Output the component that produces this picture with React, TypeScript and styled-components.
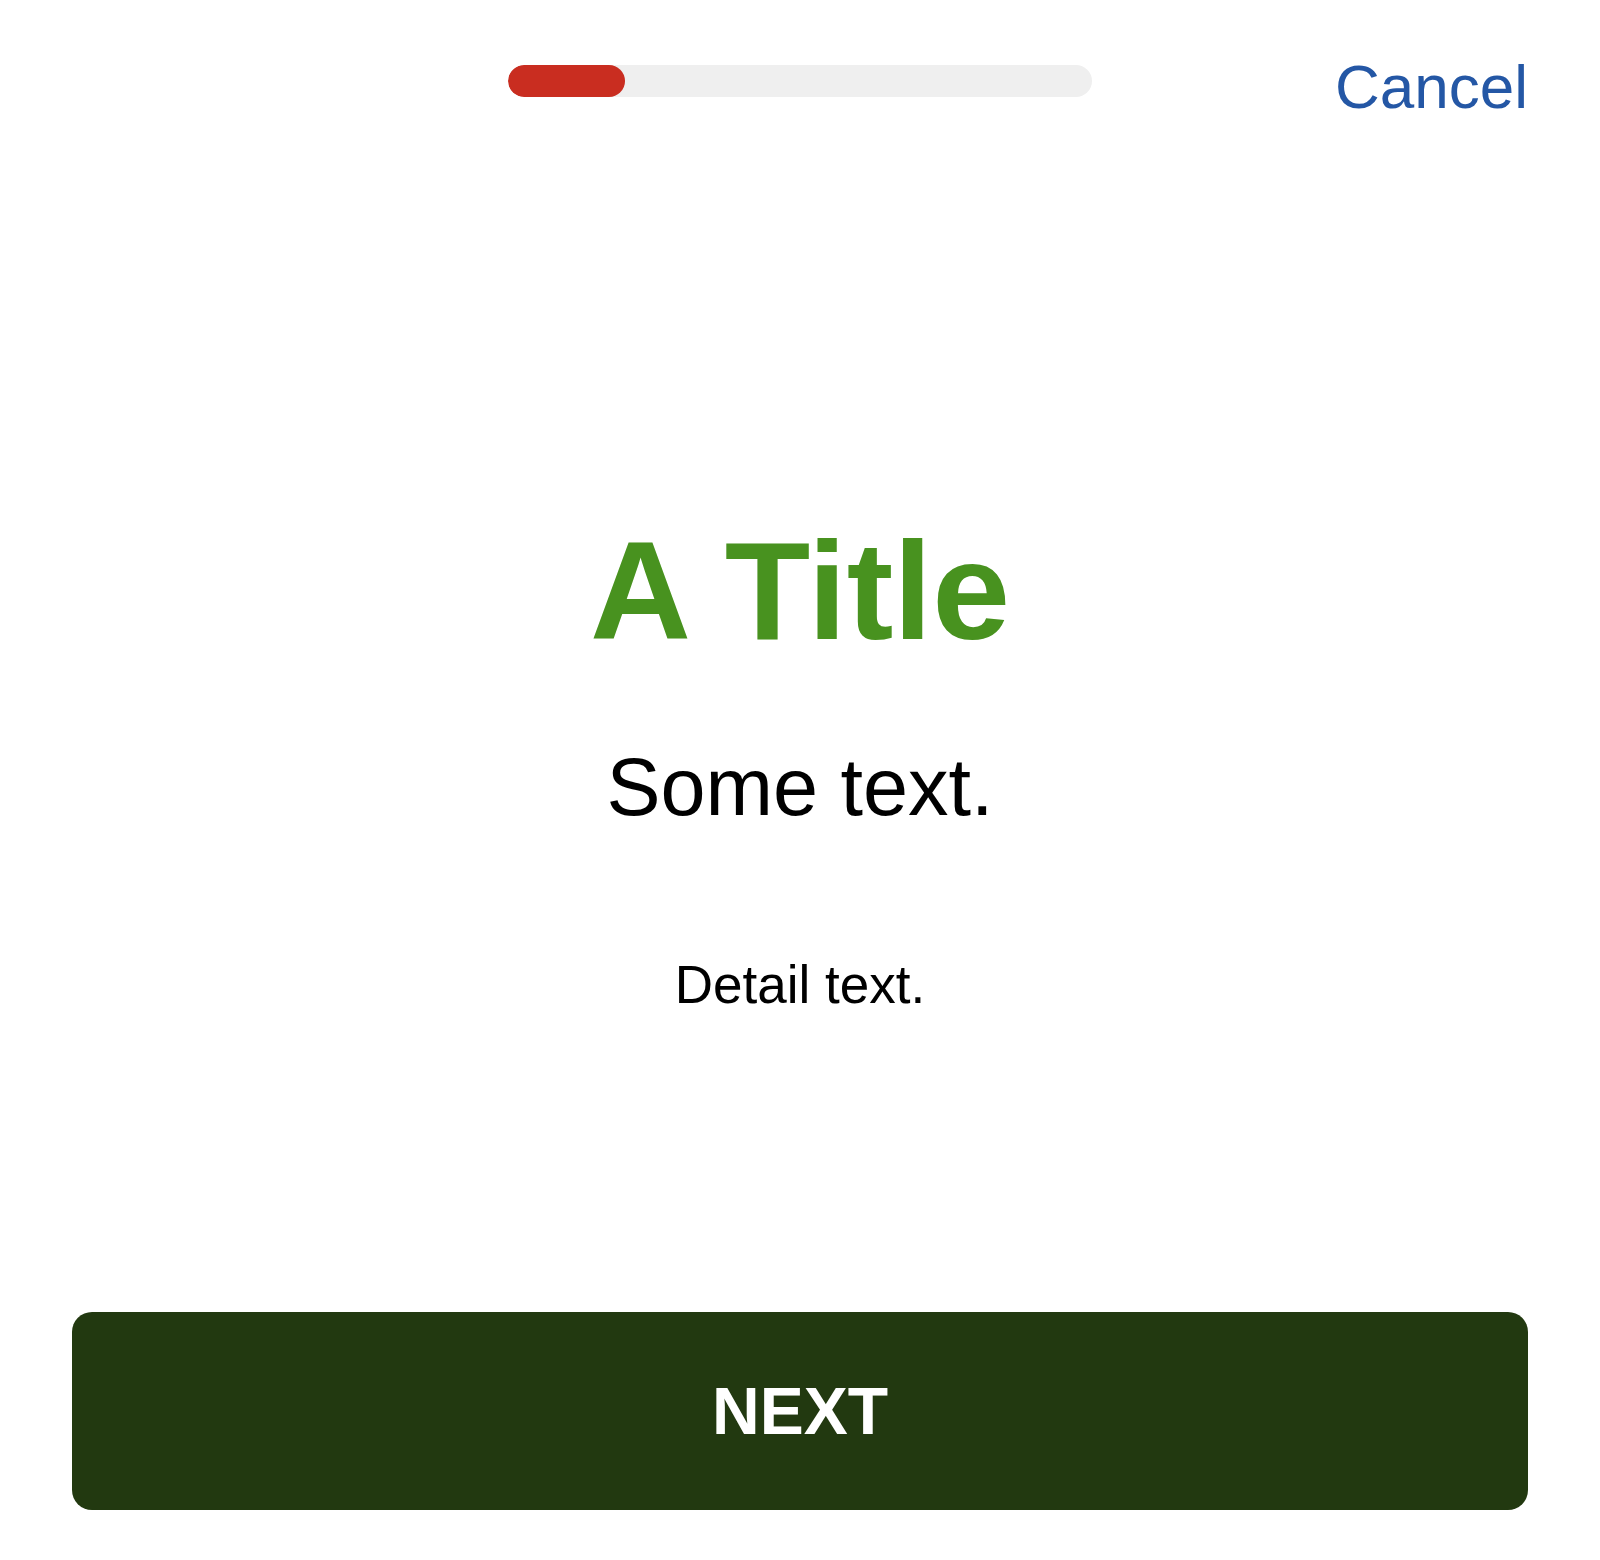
import React from "react";
import styled, { createGlobalStyle } from "styled-components";

const GlobalStyle = createGlobalStyle`
  html, body {
    margin: 0;
    padding: 0;
    background: #ffffff;
  }
  body {
    font-family: "Liberation Sans", Arial, Helvetica, sans-serif;
    -webkit-font-smoothing: antialiased;
  }
  * {
    box-sizing: border-box;
  }
`;

const Page = styled.div`
  height: 1560px;
  display: flex;
  flex-direction: column;
  padding: 56px 72px 50px;
  background: #ffffff;
`;

const Header = styled.header`
  display: grid;
  grid-template-columns: 1fr 584px 1fr;
  align-items: start;
`;

const Track = styled.div`
  grid-column: 2;
  margin-top: 9px;
  height: 32px;
  border-radius: 16px;
  background: #efefef;
  overflow: hidden;
`;

const Fill = styled.div`
  height: 100%;
  border-radius: 16px;
  background: #c92d20;
`;

const CancelButton = styled.button`
  grid-column: 3;
  justify-self: end;
  padding: 0;
  border: none;
  background: none;
  font-family: inherit;
  font-size: 62px;
  line-height: 1;
  color: #2457a5;
  cursor: pointer;
`;

const Main = styled.main`
  flex: 1;
  display: flex;
  flex-direction: column;
  align-items: center;
  padding-top: 403px;
  text-align: center;
`;

const Title = styled.h1`
  margin: 0;
  font-size: 140px;
  line-height: 1;
  font-weight: 700;
  color: #48921f;
`;

const Lead = styled.p`
  margin: 86px 0 0;
  font-size: 81px;
  line-height: 1;
  color: #000000;
`;

const Detail = styled.p`
  margin: 130px 0 0;
  font-size: 53px;
  line-height: 1;
  color: #000000;
`;

const NextButton = styled.button`
  width: 100%;
  height: 198px;
  border: none;
  border-radius: 20px;
  background: #223910;
  color: #ffffff;
  font-family: inherit;
  font-size: 66px;
  font-weight: 700;
  line-height: 1;
  text-transform: uppercase;
  cursor: pointer;
`;

export default function App() {
  const progress = 20;
  return (
    <>
      <GlobalStyle />
      <Page>
        <Header>
          <Track>
            <Fill style={{ width: `${progress}%` }} />
          </Track>
          <CancelButton type="button">Cancel</CancelButton>
        </Header>
        <Main>
          <Title>A Title</Title>
          <Lead>Some text.</Lead>
          <Detail>Detail text.</Detail>
        </Main>
        <NextButton type="button">Next</NextButton>
      </Page>
    </>
  );
}
